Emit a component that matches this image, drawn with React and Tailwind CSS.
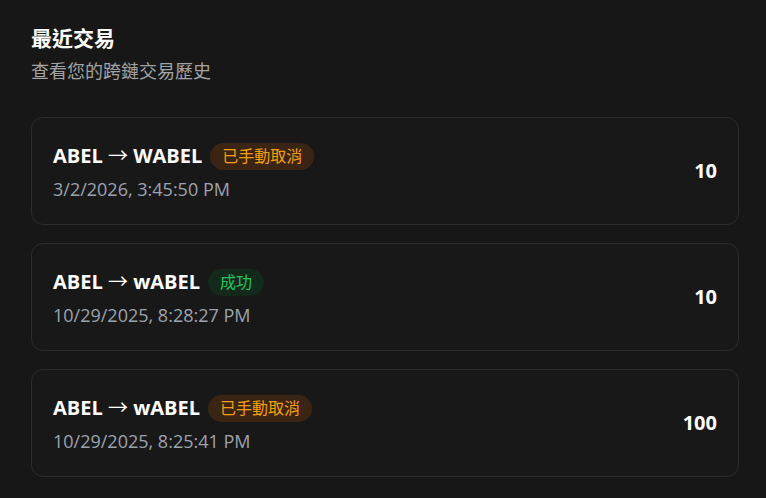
import React from "react";

const txs = [
	{ from: "ABEL", to: "WABEL", status: "cancelled", time: "3/2/2026, 3:45:50 PM", amount: "10" },
	{ from: "ABEL", to: "wABEL", status: "success", time: "10/29/2025, 8:28:27 PM", amount: "10" },
	{ from: "ABEL", to: "wABEL", status: "cancelled", time: "10/29/2025, 8:25:41 PM", amount: "100" },
];

function StatusBadge({ status }) {
	if (status === "success") {
		return (
			<span className="flex h-[27px] items-center rounded-full bg-[#13291b] px-3 text-base text-[#22c55e]">
				成功
			</span>
		);
	}
	return (
		<span className="flex h-[27px] items-center rounded-full bg-[#3a2514] px-3 text-base text-[#f59e0b]">
			已手動取消
		</span>
	);
}

export default function App() {
	return (
		<div
			className="min-h-[498px] w-full bg-[#171717] pl-[31px] pr-[27px] pt-6 pb-5"
			style={{ fontFamily: '"Open Sans", "Noto Sans CJK TC", sans-serif' }}
		>
			{/* HEADER */}
			<div className="mb-8">
				<h2 className="text-[21px] font-bold leading-7 text-white">最近交易</h2>
				<p className="mt-[5px] text-lg leading-7 text-[#a3a3a3]">
					查看您的跨鏈交易歷史
				</p>
			</div>

			{/* LIST */}
			<div className="flex flex-col gap-[18px]">
				{txs.map((tx, idx) => (
					<div
						key={idx}
						className="flex h-[108px] items-center justify-between rounded-xl border border-[#2c2c2c] bg-[#181818] px-[21px]"
					>
						<div className="flex flex-col gap-[5px] pt-[3px]">
							<div className="flex h-7 items-center gap-2">
								<span className="text-xl font-bold leading-7 text-white">
									{tx.from} <span className="font-normal">→</span> {tx.to}
								</span>
								<StatusBadge status={tx.status} />
							</div>
							<span className="text-lg leading-7 text-[#9ca3af]">{tx.time}</span>
						</div>
						<span className="text-xl font-bold text-white">{tx.amount}</span>
					</div>
				))}
			</div>
		</div>
	);
}
